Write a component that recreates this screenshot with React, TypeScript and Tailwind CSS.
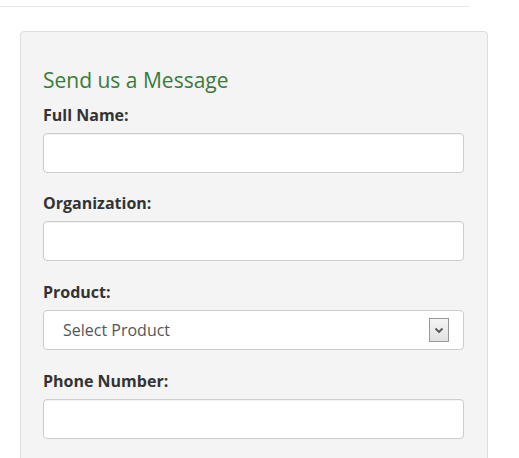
import React from "react";

const font = { fontFamily: '"Open Sans", "Noto Sans", Arial, sans-serif' };

function Field({ label, children }: { label: string; children: React.ReactNode }) {
  return (
    <div className="flex flex-col">
      <label className="text-[16px] font-bold leading-[22px] text-[#333] mb-[7px]">{label}</label>
      {children}
    </div>
  );
}

function TextInput() {
  return (
    <div className="h-[40px] w-[421px] rounded-[4px] border border-[#ccc] bg-white shadow-[inset_0_1px_1px_rgba(0,0,0,0.05)]" />
  );
}

export default function App() {
  return (
    <div className="w-[519px] h-[458px] bg-white overflow-hidden" style={font}>
      <div className="pt-[6px]">
        <div className="h-[1px] w-[470px] bg-[#e8e8e8]" />
      </div>
      <div className="ml-[20px] mt-[24px] w-[468px] h-[500px] rounded-[4px] border border-[#ddd] bg-[#f4f4f4] shadow-[0_1px_1px_rgba(0,0,0,0.05)] pl-[22px] pr-[23px] pt-[35px]">
        <h2 className="text-[21px] leading-[26px] font-normal text-[#3b7a3b] mb-[11px]">Send us a Message</h2>
        <div className="flex flex-col gap-[19px]">
          <Field label="Full Name:">
            <TextInput />
          </Field>
          <Field label="Organization:">
            <TextInput />
          </Field>
          <div className="mt-[1px]">
            <Field label="Product:">
              <div className="h-[40px] w-[421px] rounded-[4px] border border-[#ccc] bg-white flex items-center pl-[19px] pr-[14px]">
                <span className="flex-1 text-[16px] text-[#555]">Select Product</span>
                <div className="h-[24px] w-[20px] border border-[#999] bg-gradient-to-b from-[#f4f4f4] to-[#e2e2e2] flex items-center justify-center">
                  <svg width="10" height="8" viewBox="0 0 10 8">
                    <path d="M1.5 2.5 L5 6 L8.5 2.5" fill="none" stroke="#555" strokeWidth="1.8" />
                  </svg>
                </div>
              </div>
            </Field>
          </div>
          <div className="mt-[1px]">
            <Field label="Phone Number:">
              <TextInput />
            </Field>
          </div>
        </div>
      </div>
    </div>
  );
}
